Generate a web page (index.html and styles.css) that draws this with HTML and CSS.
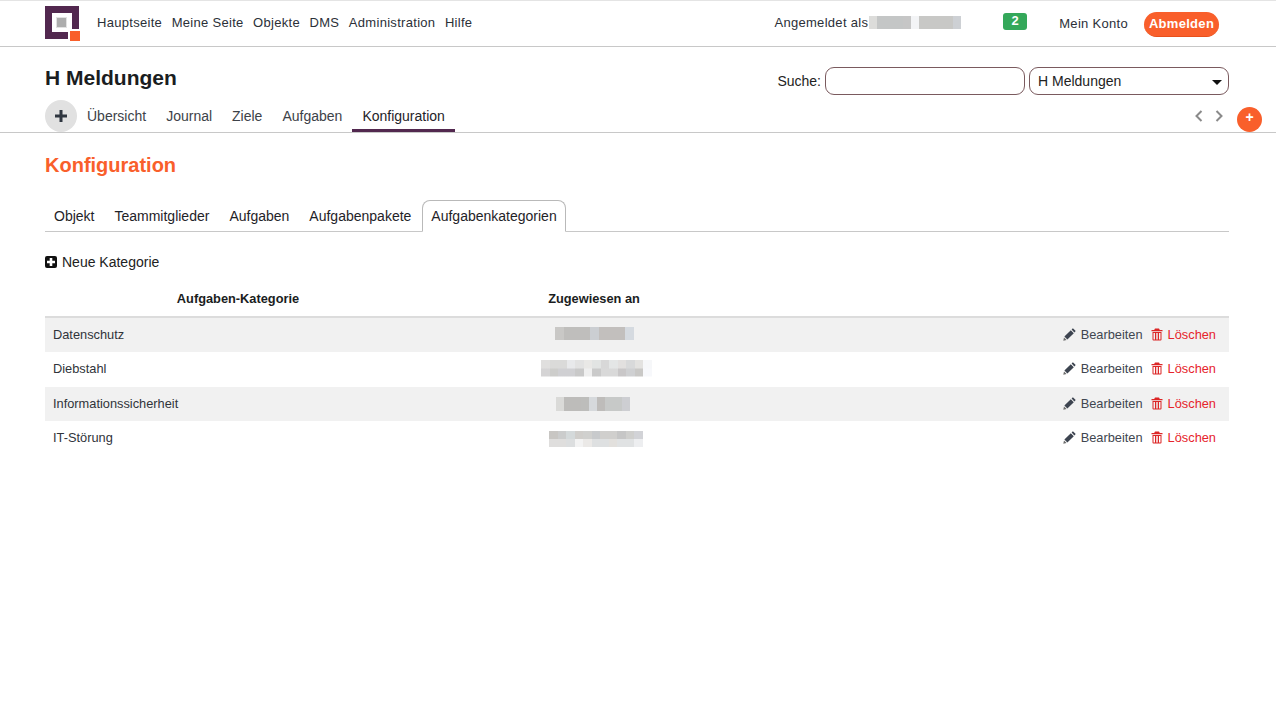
FILE: index.html
```html
<!DOCTYPE html>
<html lang="de">
<head>
<meta charset="utf-8">
<title>H Meldungen – Konfiguration</title>
<link rel="stylesheet" href="styles.css">
</head>
<body>
<header class="topbar">
  <div class="logo"><span class="logo-dot"></span><span class="logo-corner"></span></div>
  <nav class="mainnav">
    <a>Hauptseite</a><a>Meine Seite</a><a>Objekte</a><a>DMS</a><a>Administration</a><a>Hilfe</a>
  </nav>
  <div class="userarea">
    <span class="login-label">Angemeldet als</span><span class="mosaic m-user"></span>
    <span class="badge">2</span>
    <a class="account">Mein Konto</a>
    <a class="logout">Abmelden</a>
  </div>
</header>
<section class="titlebar">
  <h1>H Meldungen</h1>
  <form class="search">
    <label>Suche:</label>
    <span class="field"></span>
    <span class="field select">H Meldungen<i class="caret"></i></span>
  </form>
</section>
<nav class="tabs">
  <span class="round-add"><svg width="12" height="12" viewBox="0 0 12 12"><path d="M4.500 0h3v4.500H12v3H7.500V12h-3V7.500H0v-3h4.500z" fill="#2f3640"/></svg></span>
  <a>Übersicht</a><a>Journal</a><a>Ziele</a><a>Aufgaben</a><a class="active">Konfiguration</a>
  <span class="arrows">
    <svg width="8" height="12" viewBox="0 0 8 12"><path d="M6.500 1 1.500 6l5 5" fill="none" stroke="#8a8a8a" stroke-width="2"/></svg>
    <svg width="8" height="12" viewBox="0 0 8 12"><path d="M1.500 1l5 5-5 5" fill="none" stroke="#8a8a8a" stroke-width="2"/></svg>
  </span>
  <span class="fab">+</span>
</nav>
<main class="content">
  <h2>Konfiguration</h2>
  <nav class="subtabs">
    <a>Objekt</a><a>Teammitglieder</a><a>Aufgaben</a><a>Aufgabenpakete</a><a class="active">Aufgabenkategorien</a>
  </nav>
  <a class="new-cat"><svg width="12" height="12" viewBox="0 0 12 12"><rect width="12" height="12" rx="2" fill="#111"/><path d="M4.700 2h2.600v2.700H10v2.600H7.300V10H4.700V7.300H2V4.700h2.700z" fill="#fff"/></svg>Neue Kategorie</a>
  <table class="cats">
    <thead><tr><th>Aufgaben-Kategorie</th><th>Zugewiesen an</th><th></th></tr></thead>
    <tbody>
      <tr><td>Datenschutz</td><td class="who"><span class="mosaic m1"></span></td><td class="acts"><a class="edit"><svg class="ico" width="13" height="13" viewBox="0 0 13 13"><path d="M9.900.3 12.700 3.100 11.400 4.400 8.600 1.600zM7.800 2.200 10.800 5.200 4.400 11.600 1.400 8.600z" fill="#3d4450"/><path d="M1 9.400 3.600 12 .3 12.700z" fill="#6b6b6b"/></svg>Bearbeiten</a><a class="del"><svg class="ico" width="12" height="13" viewBox="0 0 12 13"><path d="M4 .5h4l.8 1.500H11.500v1.300H.5V2h2.700zM1.500 4h9v7.500a1 1 0 0 1-1 1h-7a1 1 0 0 1-1-1zm1 1v6.500h1.500V5zm2.750 0v6.500h1.500V5zm2.750 0v6.500h1.500V5z" fill="#dc2626" fill-rule="evenodd"/></svg>Löschen</a></td></tr>
      <tr><td>Diebstahl</td><td class="who"><span class="mosaic m2"></span></td><td class="acts"><a class="edit"><svg class="ico" width="13" height="13" viewBox="0 0 13 13"><path d="M9.900.3 12.700 3.100 11.400 4.400 8.600 1.600zM7.800 2.200 10.800 5.200 4.400 11.600 1.400 8.600z" fill="#3d4450"/><path d="M1 9.400 3.600 12 .3 12.700z" fill="#6b6b6b"/></svg>Bearbeiten</a><a class="del"><svg class="ico" width="12" height="13" viewBox="0 0 12 13"><path d="M4 .5h4l.8 1.500H11.500v1.300H.5V2h2.700zM1.500 4h9v7.500a1 1 0 0 1-1 1h-7a1 1 0 0 1-1-1zm1 1v6.500h1.500V5zm2.750 0v6.500h1.500V5zm2.750 0v6.500h1.500V5z" fill="#dc2626" fill-rule="evenodd"/></svg>Löschen</a></td></tr>
      <tr><td>Informationssicherheit</td><td class="who"><span class="mosaic m3"></span></td><td class="acts"><a class="edit"><svg class="ico" width="13" height="13" viewBox="0 0 13 13"><path d="M9.900.3 12.700 3.100 11.400 4.400 8.600 1.600zM7.800 2.200 10.800 5.200 4.400 11.600 1.400 8.600z" fill="#3d4450"/><path d="M1 9.400 3.600 12 .3 12.700z" fill="#6b6b6b"/></svg>Bearbeiten</a><a class="del"><svg class="ico" width="12" height="13" viewBox="0 0 12 13"><path d="M4 .5h4l.8 1.500H11.500v1.300H.5V2h2.700zM1.500 4h9v7.500a1 1 0 0 1-1 1h-7a1 1 0 0 1-1-1zm1 1v6.500h1.500V5zm2.750 0v6.500h1.500V5zm2.750 0v6.500h1.500V5z" fill="#dc2626" fill-rule="evenodd"/></svg>Löschen</a></td></tr>
      <tr><td>IT-Störung</td><td class="who"><span class="mosaic m4"></span></td><td class="acts"><a class="edit"><svg class="ico" width="13" height="13" viewBox="0 0 13 13"><path d="M9.900.3 12.700 3.100 11.400 4.400 8.600 1.600zM7.800 2.200 10.800 5.200 4.400 11.600 1.400 8.600z" fill="#3d4450"/><path d="M1 9.400 3.600 12 .3 12.700z" fill="#6b6b6b"/></svg>Bearbeiten</a><a class="del"><svg class="ico" width="12" height="13" viewBox="0 0 12 13"><path d="M4 .5h4l.8 1.500H11.500v1.300H.5V2h2.700zM1.500 4h9v7.500a1 1 0 0 1-1 1h-7a1 1 0 0 1-1-1zm1 1v6.500h1.500V5zm2.750 0v6.500h1.500V5zm2.750 0v6.500h1.500V5z" fill="#dc2626" fill-rule="evenodd"/></svg>Löschen</a></td></tr>
    </tbody>
  </table>
</main>
</body>
</html>
```
FILE: styles.css
```css
*, *::before, *::after { box-sizing: border-box; }
html, body { margin: 0; padding: 0; }
body {
  width: 1276px;
  height: 716px;
  overflow: hidden;
  background: #fff;
  color: #1f2328;
  font-family: "Liberation Sans", Arial, sans-serif;
  font-size: 14px;
}
.topbar {
  height: 47px;
  border-top: 1px solid #e4e4e4;
  border-bottom: 1px solid #c8c8c8;
  display: flex;
  align-items: center;
  padding: 0 57px 0 45px;
}
.logo {
  position: relative;
  width: 35px;
  height: 35px;
  flex: none;
}
.logo::before {
  content: "";
  position: absolute;
  left: 0;
  top: 0;
  width: 34px;
  height: 33px;
  border: 7px solid #52284f;
  background: #fff;
}
.logo-dot {
  position: absolute;
  left: 12px;
  top: 12px;
  width: 9px;
  height: 9px;
  background: #adadad;
  outline: 1px solid #e2e2e2;
}
.logo-corner {
  position: absolute;
  right: -2px;
  bottom: -2px;
  width: 14px;
  height: 14px;
  border: 2px solid #fff;
  background: #f95f2b;
}
.mainnav {
  display: flex;
  gap: 9.5px;
  margin: -2px 0 0 17px;
  font-size: 13px;
  letter-spacing: 0.3px;
  color: #2b3038;
}
.userarea {
  margin-left: auto;
  display: flex;
  align-items: center;
  font-size: 13px;
  letter-spacing: 0.3px;
  color: #2b3038;
}
.login-label { margin: -2px 1px 0 0; }
.mosaic { display: block; }
.m-user {
  width: 92px;
  height: 13px;
  margin-top: -2px;
  background: linear-gradient(90deg, #dcdcda 0 8px, #c4c6c6 8px 34px, #c6c6c6 34px 42px, #f3f4f6 42px 50px, #c8c8c6 50px 84px, #cdd0d4 84px 92px);
}
.badge {
  margin-left: 42px;
  width: 24px;
  height: 17px;
  margin-top: -5px;
  border-radius: 3px;
  background: #34a85a;
  color: #fff;
  font-weight: 700;
  text-align: center;
  line-height: 15px;
  font-size: 13px;
}
.account { margin-left: 32px; }
.logout {
  margin: 2px 0 0 16px;
  height: 25px;
  padding: 0 3px;
  border-radius: 12.5px;
  background: #f95f2b;
  color: #fff;
  font-weight: 700;
  line-height: 23px;
  border-bottom: 1px solid #e8501c;
  width: 75px;
  text-align: center;
}
.titlebar {
  display: flex;
  justify-content: space-between;
  height: 53px;
  padding: 19px 47px 0 45px;
}
h1 {
  margin: 0;
  font-size: 21px;
  line-height: 24px;
  font-weight: 700;
  color: #1a1d21;
}
.search {
  display: flex;
  align-items: flex-start;
  gap: 4px;
  margin: 1px 0 0;
}
.search label { line-height: 28px; color: #222; }
.field {
  display: block;
  width: 200px;
  height: 28px;
  border: 1px solid #7a5a5e;
  border-radius: 9px;
  background: #fff;
  line-height: 26px;
  padding-left: 8px;
  position: relative;
  color: #222;
}
.caret {
  position: absolute;
  right: 6px;
  top: 12px;
  border: 5px solid transparent;
  border-top-color: #111;
  border-bottom: 0;
}
.tabs {
  height: 33px;
  display: flex;
  align-items: flex-start;
  padding-left: 45px;
  border-bottom: 1px solid #c8c8c8;
  position: relative;
  color: #3d4248;
}
.tabs a {
  height: 32px;
  line-height: 32px;
  padding: 0 10px;
}
.tabs a.active {
  color: #1f2328;
  border-bottom: 3px solid #52284f;
}
.round-add {
  width: 32px;
  height: 32px;
  border-radius: 50%;
  background: #e1e1e1;
  display: flex;
  align-items: center;
  justify-content: center;
}
.arrows {
  margin-left: auto;
  margin-right: 53px;
  display: flex;
  gap: 12px;
  padding-top: 10px;
}
.fab {
  position: absolute;
  left: 1237px;
  top: 7px;
  width: 25px;
  height: 25px;
  border-radius: 50%;
  background: #f95f2b;
  color: #fff;
  font-weight: 700;
  text-align: center;
  line-height: 20px;
}
.content { padding: 0 47px 0 45px; }
h2 {
  margin: 0;
  padding-top: 20px;
  font-size: 20px;
  line-height: 24px;
  font-weight: 700;
  color: #f95f2b;
}
.subtabs {
  display: flex;
  height: 32px;
  margin-top: 23px;
  border-bottom: 1px solid #c8c8c8;
}
.subtabs a {
  height: 32px;
  line-height: 33px;
  padding: 0 10px 0 9px;
  margin-right: 1px;
}
.subtabs a.active {
  border: 1px solid #b9b9b9;
  border-bottom: 1px solid #fff;
  border-radius: 8px 8px 0 0;
  line-height: 31px;
  padding: 0 8px;
  background: #fff;
  margin-right: 0;
}
.new-cat {
  display: flex;
  align-items: center;
  gap: 5px;
  height: 16px;
  margin-top: 22px;
  color: #222;
}
.cats {
  width: 1184px;
  margin-top: 13px;
  border-collapse: separate;
  border-spacing: 0;
  table-layout: fixed;
  font-size: 12.8px;
}
.cats th {
  height: 35px;
  border-bottom: 2px solid #dcdcdc;
  font-weight: 700;
  text-align: center;
  color: #1a1d21;
  padding: 0 0 2px;
}
.cats th:nth-child(1) { width: 386px; }
.cats th:nth-child(2) { width: 326px; }
.cats td {
  padding: 6.9px 8px 8.3px;
  line-height: 19.2px;
  vertical-align: top;
  color: #30343a;
}
.cats tbody tr:nth-child(odd) { background: #f1f1f1; }
.m1 {
  width: 79px;
  height: 13px;
  margin: 2.1px 0 0 116px;
  background: linear-gradient(90deg, #c9c8c6 0 9px, #bfbebc 9px 35px, #cbced2 35px 44px, #c2bfbd 44px 70px, #d5dae0 70px 79px);
}
.m2 {
  width: 111px;
  height: 17px;
  margin: 0.7px 0 0 102px;
  background:
    linear-gradient(90deg, #e0dfde 0 9px, #dadad9 9px 26px, #e8e9eb 26px 34px, #e2e2e2 34px 43px, #e9e8e6 43px 51px, #e2e4e3 51px 60px, #d8d8d8 60px 68px, #e4e6e6 68px 77px, #e2e0df 77px 85px, #d8d9da 85px 94px, #e3e2e0 94px 102px, #f6f7f9 102px 111px) top / 100% 8.500px no-repeat,
    linear-gradient(90deg, #d5d4d5 0 9px, #cdcdcb 9px 17px, #d0d0d3 17px 34px, #c9c9c9 34px 43px, #efefef 43px 51px, #cacaca 51px 60px, #d9d9d9 60px 77px, #c9c7c8 77px 85px, #cfd0d2 85px 94px, #c9c8c6 94px 102px, #f7f8fb 102px 111px) bottom / 100% 8.500px no-repeat;
}
.m3 {
  width: 74px;
  height: 14px;
  margin: 3.3px 0 0 117px;
  background: linear-gradient(90deg, #dadad8 0 8px, #bdbcba 8px 25px, #bdbdbb 25px 33px, #d6d9dc 33px 41px, #bebcba 41px 49px, #c7c9c8 49px 66px, #cdced2 66px 74px);
}
.m4 {
  width: 94px;
  height: 16px;
  margin: 2.9px 0 0 110px;
  background:
    linear-gradient(90deg, #c8c6c3 0 9px, #cbcccc 9px 17px, #d4d9da 17px 26px, #d0cecb 26px 34px, #d0d0ce 34px 43px, #c8cacc 43px 51px, #d0cfcd 51px 68px, #c6c6c6 68px 77px, #cfcfcd 77px 85px, #d2d3d7 85px 94px) top / 100% 8px no-repeat,
    linear-gradient(90deg, #dfdedd 0 17px, #dcdedf 17px 26px, #f3f3f3 26px 34px, #ebe9e7 34px 43px, #dee0e1 43px 60px, #e2e0dd 60px 68px, #e0e2e3 68px 85px, #edeef0 85px 94px) bottom / 100% 8px no-repeat;
}
.acts { text-align: right; padding-right: 13px !important; white-space: nowrap; }
.acts a { display: inline-flex; align-items: center; gap: 5px; vertical-align: top; }
.edit { color: #3f4650; }
.del { color: #e6242c; margin-left: 8px; }
.ico { flex: none; }
```
